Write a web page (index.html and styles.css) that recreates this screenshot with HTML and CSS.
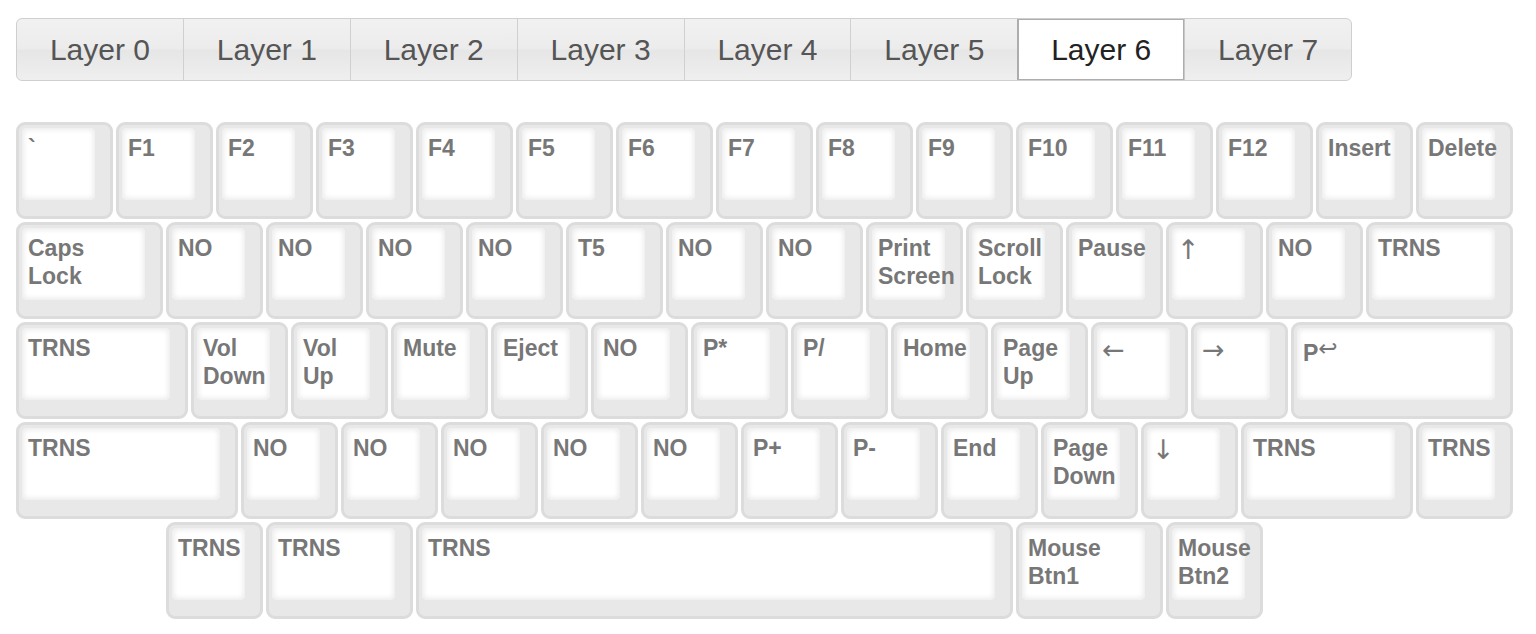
FILE: index.html
```html
<!DOCTYPE html>
<html>
<head>
<meta charset="utf-8">
<link rel="stylesheet" href="styles.css">
</head>
<body>
<div class="page">
  <div class="tabs">
    <div class="tab">Layer 0</div>
    <div class="tab">Layer 1</div>
    <div class="tab">Layer 2</div>
    <div class="tab">Layer 3</div>
    <div class="tab">Layer 4</div>
    <div class="tab">Layer 5</div>
    <div class="tab active">Layer 6</div>
    <div class="tab">Layer 7</div>
  </div>
  <div class="keyboard">
    <div class="row">
      <div class="key w1"><div class="top">`</div></div>
      <div class="key w1"><div class="top">F1</div></div>
      <div class="key w1"><div class="top">F2</div></div>
      <div class="key w1"><div class="top">F3</div></div>
      <div class="key w1"><div class="top">F4</div></div>
      <div class="key w1"><div class="top">F5</div></div>
      <div class="key w1"><div class="top">F6</div></div>
      <div class="key w1"><div class="top">F7</div></div>
      <div class="key w1"><div class="top">F8</div></div>
      <div class="key w1"><div class="top">F9</div></div>
      <div class="key w1"><div class="top">F10</div></div>
      <div class="key w1"><div class="top">F11</div></div>
      <div class="key w1"><div class="top">F12</div></div>
      <div class="key w1"><div class="top">Insert</div></div>
      <div class="key w1"><div class="top">Delete</div></div>
    </div>
    <div class="row">
      <div class="key w15"><div class="top">Caps<br>Lock</div></div>
      <div class="key w1"><div class="top">NO</div></div>
      <div class="key w1"><div class="top">NO</div></div>
      <div class="key w1"><div class="top">NO</div></div>
      <div class="key w1"><div class="top">NO</div></div>
      <div class="key w1"><div class="top">T5</div></div>
      <div class="key w1"><div class="top">NO</div></div>
      <div class="key w1"><div class="top">NO</div></div>
      <div class="key w1"><div class="top">Print<br>Screen</div></div>
      <div class="key w1"><div class="top">Scroll<br>Lock</div></div>
      <div class="key w1"><div class="top">Pause</div></div>
      <div class="key w1"><div class="top arrow">↑</div></div>
      <div class="key w1"><div class="top">NO</div></div>
      <div class="key w15"><div class="top">TRNS</div></div>
    </div>
    <div class="row">
      <div class="key w175"><div class="top">TRNS</div></div>
      <div class="key w1"><div class="top">Vol<br>Down</div></div>
      <div class="key w1"><div class="top">Vol<br>Up</div></div>
      <div class="key w1"><div class="top">Mute</div></div>
      <div class="key w1"><div class="top">Eject</div></div>
      <div class="key w1"><div class="top">NO</div></div>
      <div class="key w1"><div class="top">P*</div></div>
      <div class="key w1"><div class="top">P/</div></div>
      <div class="key w1"><div class="top">Home</div></div>
      <div class="key w1"><div class="top">Page<br>Up</div></div>
      <div class="key w1"><div class="top arrow">←</div></div>
      <div class="key w1"><div class="top arrow">→</div></div>
      <div class="key w225"><div class="top">P<span class="ret">↩</span></div></div>
    </div>
    <div class="row">
      <div class="key w225"><div class="top">TRNS</div></div>
      <div class="key w1"><div class="top">NO</div></div>
      <div class="key w1"><div class="top">NO</div></div>
      <div class="key w1"><div class="top">NO</div></div>
      <div class="key w1"><div class="top">NO</div></div>
      <div class="key w1"><div class="top">NO</div></div>
      <div class="key w1"><div class="top">P+</div></div>
      <div class="key w1"><div class="top">P-</div></div>
      <div class="key w1"><div class="top">End</div></div>
      <div class="key w1"><div class="top">Page<br>Down</div></div>
      <div class="key w1"><div class="top arrow">↓</div></div>
      <div class="key w175"><div class="top">TRNS</div></div>
      <div class="key w1"><div class="top">TRNS</div></div>
    </div>
    <div class="row indent">
      <div class="key w1"><div class="top">TRNS</div></div>
      <div class="key w15"><div class="top">TRNS</div></div>
      <div class="key w6"><div class="top">TRNS</div></div>
      <div class="key w15"><div class="top">Mouse<br>Btn1</div></div>
      <div class="key w1"><div class="top">Mouse<br>Btn2</div></div>
    </div>
  </div>
</div>
</body>
</html>
```
FILE: styles.css
```css
html, body {
  margin: 0;
  padding: 0;
  background: #fff;
}
body {
  font-family: "Liberation Sans", Arial, Helvetica, sans-serif;
}
.page {
  padding: 18px 16px 0 16px;
}
.tabs {
  display: flex;
  width: 1336px;
  height: 63px;
  box-sizing: border-box;
  border: 1px solid #cfcfcf;
  border-radius: 6px;
  background: linear-gradient(#f1f1f1 0%, #ececec 48%, #e6e6e6 52%, #efefef 100%);
  overflow: hidden;
}
.tab {
  flex: 1;
  display: flex;
  align-items: center;
  justify-content: center;
  font-size: 30px;
  color: #555;
  border-left: 1px solid #d0d0d0;
}
.tab:first-child {
  border-left: none;
}
.tab.active {
  background: #fff;
  color: #222;
  box-shadow: inset 0 0 0 1px #adadad;
  border-left-color: #adadad;
}
.tab.active + .tab {
  border-left-color: #c8c8c8;
}
.keyboard {
  margin-top: 41px;
}
.row {
  display: flex;
  height: 100px;
}
.row.indent {
  padding-left: 150px;
}
.key {
  box-sizing: border-box;
  height: 97px;
  margin-right: 3px;
  border: 3px solid #dcdcdc;
  border-radius: 9px;
  background: #e8e8e8;
  padding: 3px 15px 16px 3px;
}
.w1 { width: 97px; }
.w15 { width: 147px; }
.w175 { width: 172px; }
.w225 { width: 222px; }
.w6 { width: 597px; }
.top {
  box-sizing: border-box;
  height: 100%;
  background: #fff;
  border-radius: 5px;
  box-shadow: inset 0 0 5px 2px #ececec;
  padding: 7px 5px 0 6px;
  font-size: 23px;
  line-height: 27.5px;
  font-weight: bold;
  color: #777;
  white-space: nowrap;
}
.top.arrow {
  font-family: "DejaVu Sans", sans-serif;
  font-weight: normal;
  font-size: 27px;
  padding-left: 5px;
  padding-top: 8px;
}
.ret {
  font-family: "DejaVu Sans", sans-serif;
  font-weight: normal;
  font-size: 23px;
  vertical-align: 5px;
}
```
